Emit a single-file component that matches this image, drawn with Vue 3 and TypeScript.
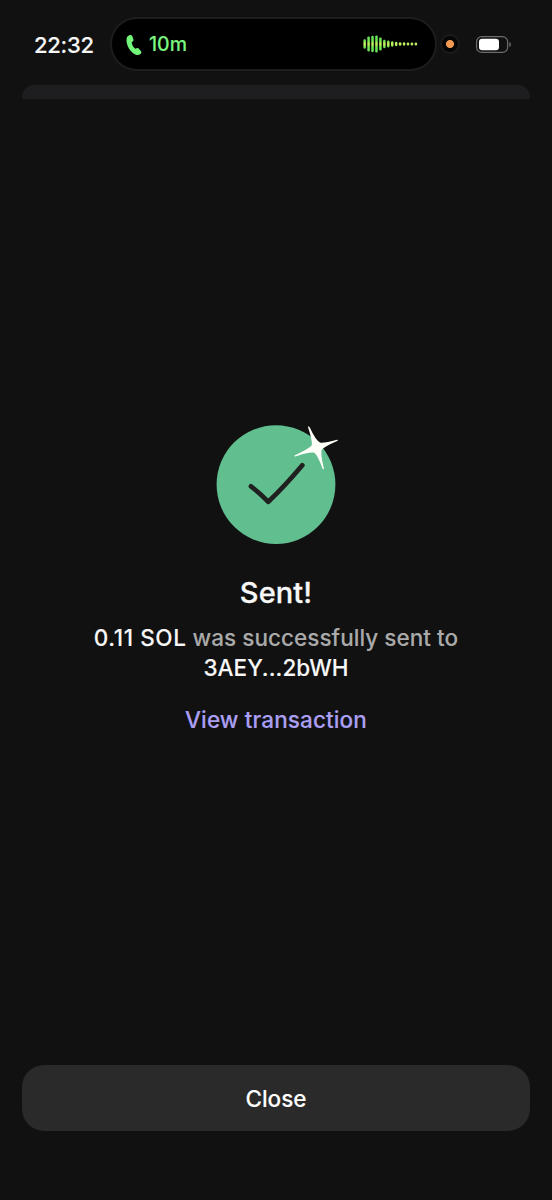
<script setup lang="ts">
interface Bar {
  x: number
  h: number
}

const heights: number[] = [9.4, 15, 16.4, 17, 13, 8.4, 6.8, 5.4, 4.4, 3.6, 3.4, 3.2, 3.2, 3]
const bars: Bar[] = heights.map((h, i) => ({ x: 0.4 + i * 3.94, h }))
</script>

<template>
  <main class="screen">
    <header class="status">
      <span class="time">22:32</span>
      <div class="island">
        <svg class="phone" width="18" height="24" viewBox="0 0 18 24" aria-hidden="true">
          <path d="M4.8 2.1C5.8 1.7 6.8 2 7.2 3L8.4 6.2C8.8 7.2 8.4 8 7.6 8.6L6.7 9.3C6.9 11.8 8.3 14.3 10.4 15.8L11.6 15.3C12.5 14.9 13.3 15 13.9 15.7L16 18.2C16.7 19 16.5 20 15.7 20.7C14.2 22.1 12.4 22.4 10.3 21.5C5.4 19.3 1.2 12.5 1.5 6.5C1.6 4.2 2.7 2.8 4.8 2.1Z" fill="#72f578" />
        </svg>
        <span class="duration">10m</span>
        <svg class="wave" width="56" height="20" viewBox="0 0 56 20" aria-hidden="true">
          <defs>
            <linearGradient id="tone" gradientUnits="userSpaceOnUse" x1="0" y1="1" x2="0" y2="19">
              <stop offset="0" stop-color="#5ce45a" />
              <stop offset=".35" stop-color="#76e852" />
              <stop offset=".5" stop-color="#d8ee62" />
              <stop offset=".65" stop-color="#76e852" />
              <stop offset="1" stop-color="#5ce45a" />
            </linearGradient>
          </defs>
          <rect v-for="bar in bars" :key="bar.x" :x="bar.x" :y="10 - bar.h / 2" width="2.5" :height="bar.h" rx="1.1" fill="url(#tone)" />
        </svg>
      </div>
      <span class="mic"></span>
      <svg class="battery" width="37" height="19" viewBox="0 0 37 19" aria-hidden="true">
        <rect x="1.6" y="1.6" width="31" height="15.8" rx="5" fill="none" stroke="#6c6c6c" stroke-width="1.2" />
        <rect x="4" y="3.7" width="20" height="11.6" rx="3.2" fill="#fff" />
        <path d="M34.4 7C36.3 7.8 36.3 11.2 34.4 12Z" fill="#777" />
      </svg>
    </header>

    <div class="sheet-edge"></div>

    <section class="result">
      <svg class="badge" width="140" height="140" viewBox="0 0 140 140" aria-hidden="true">
        <circle cx="70" cy="68.6" r="59.4" fill="#60be8f" />
        <path d="M45 70.3Q54 77.2 62.3 85.8Q78.5 70.5 96.3 49.3" fill="none" stroke="#202020" stroke-width="4.7" stroke-linecap="round" stroke-linejoin="round" />
        <path d="M102.2 10.2Q103.2 10.4 103.8 11.6Q109.6 24.3 114 26.6Q117.6 27.6 131.1 23.8Q132.1 23.9 131.7 24.8Q117.6 31 115.5 34Q114.6 38.4 117.9 52.6Q117.7 54 116.7 53Q111.8 39.5 108.3 36.8Q104.4 35.4 89.2 40.6Q87.9 40.6 88.5 39.5Q103 32.4 105.7 29.4Q106.7 25.5 102 11Z" fill="#fffffa" />
      </svg>
      <h1>Sent!</h1>
      <p class="message"><b>0.11 SOL</b> was successfully sent to<br><span class="address">3AEY...2bWH</span></p>
      <a class="link">View transaction</a>
    </section>

    <button class="close" type="button"><span>Close</span></button>
  </main>
</template>

<style>
html,
body {
  background: #111;
}
</style>

<style scoped>
.screen {
  box-sizing: border-box;
  width: 552px;
  height: 1200px;
  padding: 0 22px 69px;
  display: flex;
  flex-direction: column;
  overflow: hidden;
  background: #111;
  color: #f7f7f7;
  font-family: Inter, "Liberation Sans", sans-serif;
  font-weight: 500;
  -webkit-text-stroke: 0.1px;
}

.status {
  flex: none;
  height: 85px;
  display: flex;
  align-items: flex-start;
}

.time {
  width: 76px;
  margin: 31px 0 0 12px;
  font-size: 22px;
  line-height: 28px;
  letter-spacing: -0.3px;
  -webkit-text-stroke-width: 0.15px;
}

.island {
  box-sizing: border-box;
  width: 327px;
  height: 54px;
  margin-top: 17px;
  padding: 0 16px 0 13px;
  display: flex;
  align-items: center;
  border: 2px solid #1d1d1e;
  border-radius: 27px;
  background: #000;
}

.phone {
  margin-top: 2px;
}

.duration {
  margin: 0 0 0 6px;
  color: #7bf681;
  font-size: 19.5px;
  line-height: 26px;
}

.wave {
  margin-left: auto;
}

.mic {
  box-sizing: border-box;
  width: 20px;
  height: 20px;
  margin: 34px 0 0 3px;
  border: 2px solid #1c1b1b;
  border-radius: 50%;
  background: radial-gradient(circle, #f19950 0 3.6px, #080605 4.4px);
}

.battery {
  margin: 35px 0 0 15px;
}

.sheet-edge {
  flex: none;
  height: 14px;
  border-radius: 12px 12px 0 0;
  background: #1e1e20;
}

.result {
  flex: 1;
  display: flex;
  flex-direction: column;
  align-items: center;
  padding-top: 317px;
  text-align: center;
}

.badge {
  flex: none;
}

h1 {
  margin: 19px 0 0;
  font-size: 29px;
  font-weight: 500;
  line-height: 36px;
  letter-spacing: 0.1px;
  -webkit-text-stroke-width: 0.3px;
}

.message {
  margin: 12px 0 0;
  color: #aaa;
  font-size: 22.5px;
  line-height: 30px;
  letter-spacing: 0.04px;
  white-space: nowrap;
}

.message b,
.address {
  color: #f7f7f7;
  font-weight: 500;
}

.message b {
  letter-spacing: 0.6px;
}

.link {
  margin-top: 22px;
  color: #ab9ff2;
  font-size: 22.5px;
  line-height: 30px;
  letter-spacing: 0.12px;
  -webkit-text-stroke-width: 0.15px;
}

.close {
  flex: none;
  height: 66px;
  padding: 2px 0 0;
  border: 0;
  border-radius: 22px;
  background: #2a2a2a;
  color: #fff;
  font: 500 22.5px/30px Inter, "Liberation Sans", sans-serif;
}
</style>
